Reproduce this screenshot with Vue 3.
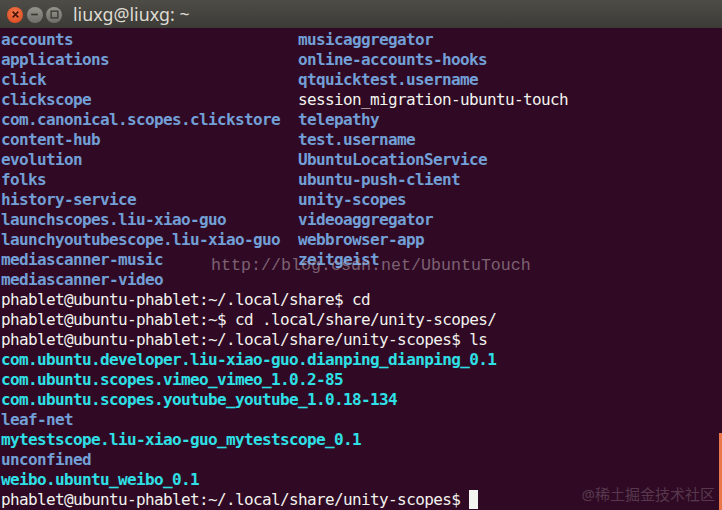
<script setup>
const rows = [
  ['accounts', 'musicaggregator'],
  ['applications', 'online-accounts-hooks'],
  ['click', 'qtquicktest.username'],
  ['clickscope', 'session_migration-ubuntu-touch', true],
  ['com.canonical.scopes.clickstore', 'telepathy'],
  ['content-hub', 'test.username'],
  ['evolution', 'UbuntuLocationService'],
  ['folks', 'ubuntu-push-client'],
  ['history-service', 'unity-scopes'],
  ['launchscopes.liu-xiao-guo', 'videoaggregator'],
  ['launchyoutubescope.liu-xiao-guo', 'webbrowser-app'],
  ['mediascanner-music', 'zeitgeist'],
  ['mediascanner-video', '']
]
const prompts = [
  'phablet@ubuntu-phablet:~/.local/share$ cd',
  'phablet@ubuntu-phablet:~$ cd .local/share/unity-scopes/',
  'phablet@ubuntu-phablet:~/.local/share/unity-scopes$ ls'
]
const scopes = [
  ['com.ubuntu.developer.liu-xiao-guo.dianping_dianping_0.1', 'cyan'],
  ['com.ubuntu.scopes.vimeo_vimeo_1.0.2-85', 'cyan'],
  ['com.ubuntu.scopes.youtube_youtube_1.0.18-134', 'cyan'],
  ['leaf-net', 'blue'],
  ['mytestscope.liu-xiao-guo_mytestscope_0.1', 'cyan'],
  ['unconfined', 'blue'],
  ['weibo.ubuntu_weibo_0.1', 'cyan']
]
</script>

<template>
  <div class="window">
    <header class="titlebar">
      <div class="controls">
        <span class="btn close">
          <svg width="9" height="9" viewBox="0 0 8 8"><path d="M1.5 1.5l5 5M6.5 1.5l-5 5" stroke="#4a1408" stroke-width="1.5" fill="none" /></svg>
        </span>
        <span class="btn">
          <svg width="9" height="9" viewBox="0 0 8 8"><path d="M1 4h6" stroke="#3a3934" stroke-width="1.5" fill="none" /></svg>
        </span>
        <span class="btn">
          <svg width="9" height="9" viewBox="0 0 8 8"><rect x="1" y="1" width="6" height="6" stroke="#3a3934" stroke-width="1.2" fill="none" /></svg>
        </span>
      </div>
      <span class="title">liuxg@liuxg: ~</span>
    </header>
    <main class="terminal">
      <div v-for="r in rows" :key="r[0]" class="listing">
        <span class="blue">{{ r[0] }}</span>
        <span :class="r[2] ? 'plain' : 'blue'">{{ r[1] }}</span>
      </div>
      <div v-for="p in prompts" :key="p" class="line plain">{{ p }}</div>
      <div v-for="s in scopes" :key="s[0]" class="line" :class="s[1]">{{ s[0] }}</div>
      <div class="line plain prompt">phablet@ubuntu-phablet:~/.local/share/unity-scopes$ <i class="cursor"></i></div>
    </main>
    <div class="mark">http://blog.csdn.net/UbuntuTouch</div>
    <div class="juejin">@稀土掘金技术社区</div>
    <div class="edge"></div>
  </div>
</template>

<style scoped>
.window {
  position: relative;
  width: 722px;
  height: 510px;
  overflow: hidden;
  background: #300a24;
}
.titlebar {
  height: 28px;
  display: flex;
  align-items: center;
  padding-left: 7px;
  background: linear-gradient(#4d4c46, #3c3b37);
  font-family: "Noto Sans", sans-serif;
}
.controls {
  display: flex;
  gap: 3.5px;
  margin-top: 1px;
}
.btn {
  width: 16px;
  height: 16px;
  border-radius: 50%;
  display: flex;
  align-items: center;
  justify-content: center;
  background: linear-gradient(#94938c, #6f6e68);
}
.btn.close {
  background: radial-gradient(circle at 50% 35%, #f2784b, #d9441c);
}
.title {
  margin-left: 11px;
  margin-top: -1px;
  font-size: 17.8px;
  color: #dfdbd2;
}
.terminal {
  padding: 2px 0 0 1px;
  font-family: "DejaVu Sans Mono", monospace;
  font-size: 16px;
  letter-spacing: -0.63px;
  line-height: 20px;
  white-space: pre;
}
.listing {
  display: grid;
  grid-template-columns: 297px 1fr;
  height: 20px;
}
.line {
  height: 20px;
}
.blue {
  color: #729fd6;
  font-weight: 700;
}
.cyan {
  color: #2ee0e6;
  font-weight: 700;
}
.plain {
  color: #f2f2ee;
  font-weight: 400;
}
.cursor {
  display: inline-block;
  width: 9px;
  height: 19px;
  vertical-align: -4px;
  background: #f4f4f0;
}
.mark {
  position: absolute;
  left: 211px;
  top: 255px;
  font-family: "Liberation Mono", monospace;
  font-size: 16.67px;
  line-height: 22px;
  color: rgba(200, 185, 195, 0.5);
  white-space: nowrap;
}
.juejin {
  position: absolute;
  right: 7px;
  top: 484px;
  font-family: "Noto Sans", "Noto Sans CJK SC", sans-serif;
  font-size: 15px;
  line-height: 20px;
  color: rgba(255, 255, 255, 0.2);
  white-space: nowrap;
}
.edge {
  position: absolute;
  right: 0;
  top: 433px;
  bottom: 0;
  width: 3px;
  background: #e9774a;
}
</style>
